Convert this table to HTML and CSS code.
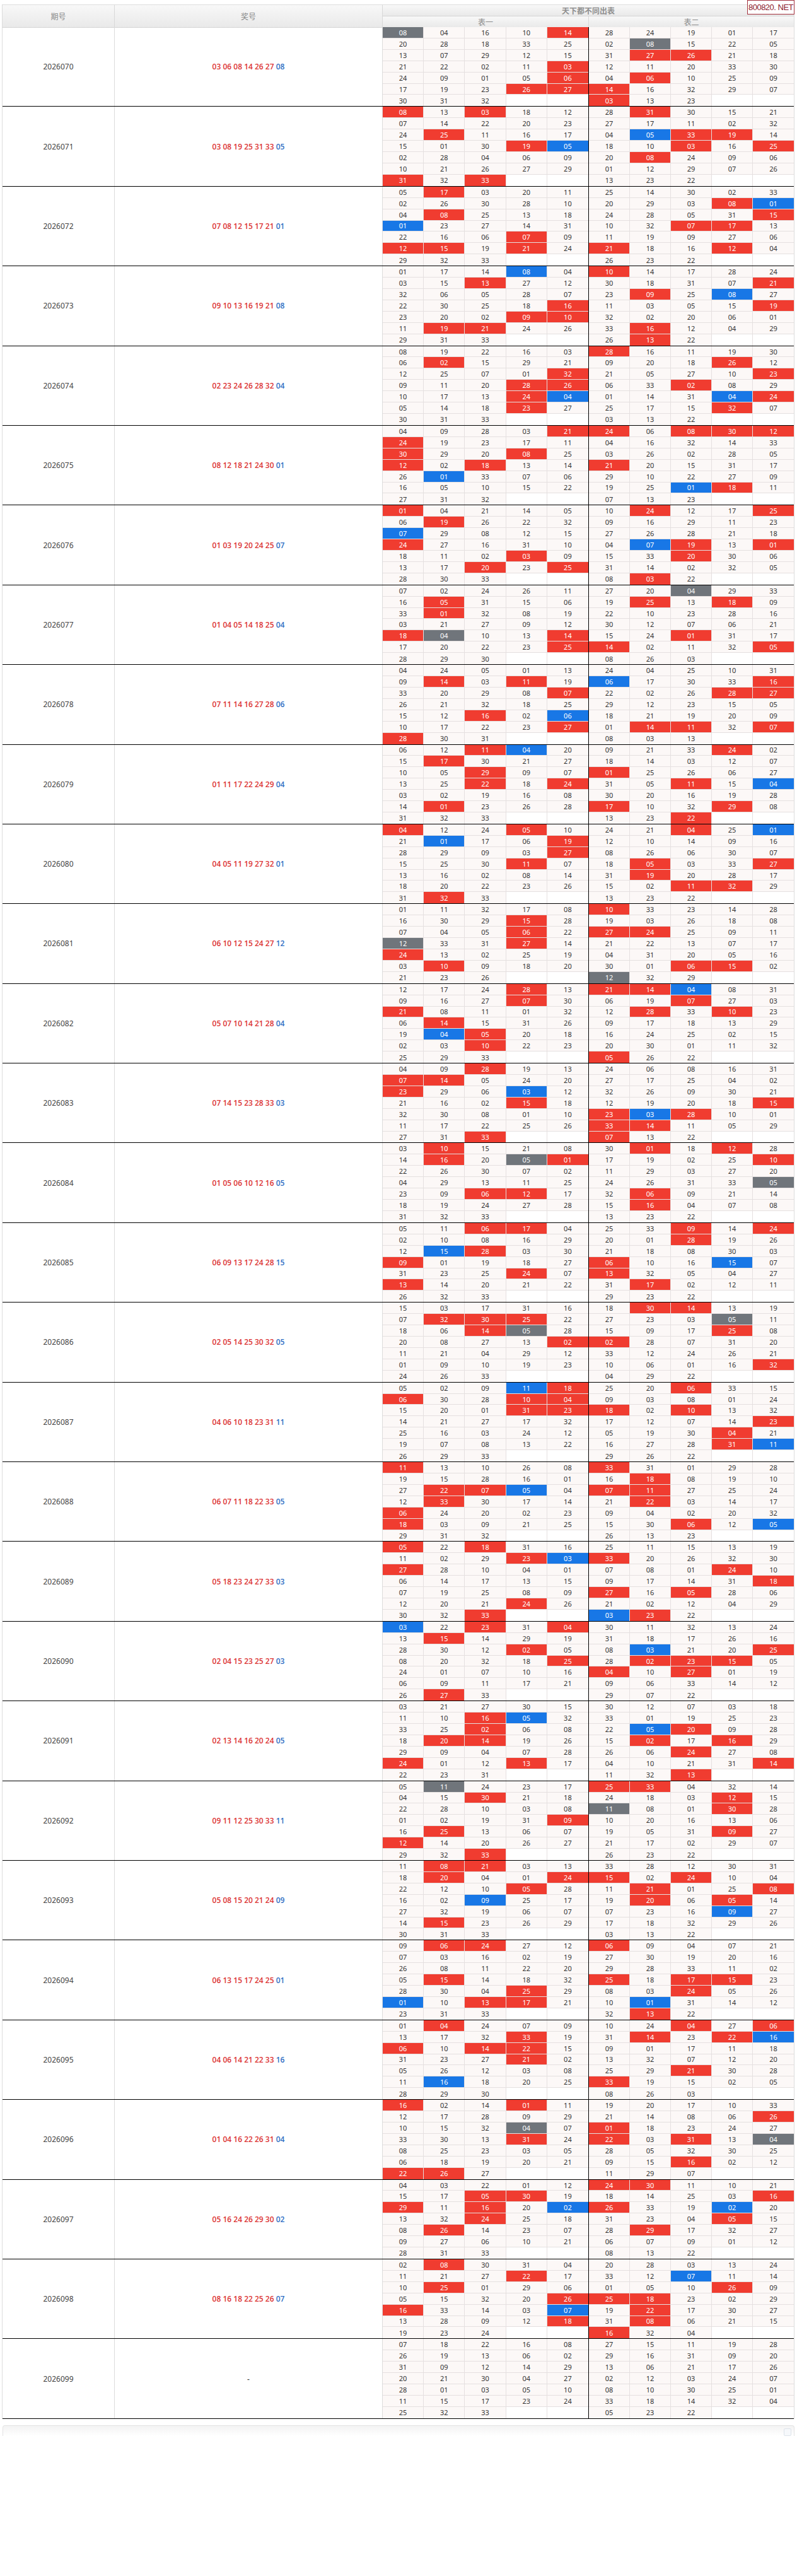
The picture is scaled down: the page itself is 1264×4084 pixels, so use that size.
FILE: index.html
```html
<!DOCTYPE html>
<html lang="zh-CN">
<head>
<meta charset="utf-8">
<title>天下都不同出表</title>
<link rel="stylesheet" href="styles.css">
</head>
<body>
<div class="page">
  <div class="brand">800820. NET</div>
  <div class="tbl">
    <div class="hd">
      <div class="h h-qh">期号</div>
      <div class="h h-jh">奖号</div>
      <div class="h h-ttl">天下都不同出表</div>
      <div class="h h-sub h-sub1">表一</div>
      <div class="h h-sub">表二</div>
    </div>
    <div id="rows"></div>
  </div>
  <div class="fold"><span class="fold-btn"></span></div>
</div>
<script src="script.js"></script>
</body>
</html>
```

FILE: styles.css
```css
html, body {
  margin: 0;
  padding: 0;
  background: #fff;
}
body {
  font-family: "Noto Sans", "Noto Sans CJK SC", sans-serif;
  color: #333;
}
.page {
  position: relative;
  width: 1264px;
  padding-top: 7px;
  box-sizing: border-box;
}
.brand {
  position: absolute;
  top: 0;
  right: 4px;
  width: 75px;
  height: 23px;
  box-sizing: border-box;
  border: 1px solid #a2303c;
  background: #fff;
  color: #8c1a2c;
  font-family: "Liberation Sans Narrow", "Liberation Sans", sans-serif;
  font-size: 13px;
  line-height: 21px;
  text-align: center;
  letter-spacing: -0.5px;
  white-space: nowrap;
  overflow: hidden;
  z-index: 2;
}
.tbl {
  margin-left: 3px;
  width: 1257px;
  border-left: 1px solid #dcdcdc;
  border-right: 1px solid #dcdcdc;
  box-sizing: border-box;
}
.hd {
  display: grid;
  grid-template-columns: 178px 425px 327px 325px;
  grid-template-rows: 18px 18px;
  border-top: 1px solid #dedede;
  box-sizing: border-box;
  height: 36px;
}
.h {
  display: flex;
  align-items: center;
  justify-content: center;
  background: linear-gradient(#f8f8f8, #e9e9e9);
  color: #8a8a8a;
  font-size: 12px;
  border-bottom: 1px solid #d4d4d4;
  border-right: 1px solid #d8d8d8;
}
.h-qh, .h-jh {
  grid-row: 1 / 3;
}
.h-ttl {
  grid-column: 3 / 5;
  border-right: 0;
  font-weight: 600;
  color: #8f8f8f;
}
.h-sub:last-child {
  border-right: 0;
}
.blk {
  display: grid;
  grid-template-columns: 178px 425px 327px 325px;
  height: 126.4px;
  border-bottom: 1px solid #000;
  box-sizing: border-box;
}
.qh, .jh {
  display: flex;
  align-items: center;
  justify-content: center;
  border-right: 1px solid #dcdcdc;
  font-size: 12px;
  color: #444;
}
.jh {
  font-family: "Open Sans", "Noto Sans", sans-serif;
  font-weight: 600;
}
.jh .win {
  white-space: pre;
}
.jh .rd {
  color: #dc3434;
}
.jh .bl {
  color: #2f6fc4;
}
.tb {
  display: grid;
  grid-template-columns: repeat(5, 1fr);
  grid-template-rows: repeat(7, 1fr);
}
.t1 {
  border-right: 1px solid #000;
}
.c {
  display: flex;
  align-items: center;
  justify-content: center;
  background: #fcf8f7;
  color: #333;
  font-size: 11px;
  border-right: 1px solid #e5e0e0;
  border-bottom: 1px solid #e5e0e0;
}
.c:nth-child(5n) {
  border-right: 0;
}
.c:nth-child(n+31) {
  border-bottom: 0;
}
.c.e {
  background: #fff;
}
.c.r {
  background: #f03c30;
  color: #fff;
}
.c.b {
  background: #1877e6;
  color: #fff;
}
.c.g {
  background: #70757b;
  color: #fff;
}
.fold {
  position: relative;
  margin: 10px 4px 0 4px;
  height: 16px;
  border: 1px solid #e3e3e3;
  border-bottom: 0;
  border-radius: 4px 4px 0 0;
  background: linear-gradient(#f3f3f3, #fff);
}
.fold-btn {
  position: absolute;
  right: 4px;
  top: 4px;
  width: 10px;
  height: 10px;
  border: 1px solid #dde3ea;
  border-radius: 2px;
  background: #f6f8fb;
}
```

FILE: script.js
```js
(function () {
  var data = [
    ["2026070", "08 04 16 10 14 20 28 18 33 25 13 07 29 12 15 21 22 02 11 03 24 09 01 05 06 17 19 23 26 27 30 31 32", "28 24 19 01 17 02 08 15 22 05 31 27 26 21 18 12 11 20 33 30 04 06 10 25 09 14 16 32 29 07 03 13 23", "03 06 08 14 26 27", "08"],
    ["2026071", "08 13 03 18 12 07 14 22 20 23 24 25 11 16 17 15 01 30 19 05 02 28 04 06 09 10 21 26 27 29 31 32 33", "28 31 30 15 21 27 17 11 02 32 04 05 33 19 14 18 10 03 16 25 20 08 24 09 06 01 12 29 07 26 13 23 22", "03 08 19 25 31 33", "05"],
    ["2026072", "05 17 03 20 11 02 26 30 28 10 04 08 25 13 18 01 23 27 14 31 22 16 06 07 09 12 15 19 21 24 29 32 33", "25 14 30 02 33 20 29 03 08 01 24 28 05 31 15 10 32 07 17 13 11 19 09 27 06 21 18 16 12 04 26 23 22", "07 08 12 15 17 21", "01"],
    ["2026073", "01 17 14 08 04 03 15 13 27 12 32 06 05 28 07 22 30 25 18 16 23 20 02 09 10 11 19 21 24 26 29 31 33", "10 14 17 28 24 30 18 31 07 21 23 09 25 08 27 11 03 05 15 19 32 02 20 06 01 33 16 12 04 29 26 13 22", "09 10 13 16 19 21", "08"],
    ["2026074", "08 19 22 16 03 06 02 15 29 21 12 25 07 01 32 09 11 20 28 26 10 17 13 24 04 05 14 18 23 27 30 31 33", "28 16 11 19 30 09 20 18 26 12 21 05 27 10 23 06 33 02 08 29 01 14 31 04 24 25 17 15 32 07 03 13 22", "02 23 24 26 28 32", "04"],
    ["2026075", "04 09 28 03 21 24 19 23 17 11 30 29 20 08 25 12 02 18 13 14 26 01 33 07 06 16 05 10 15 22 27 31 32", "24 06 08 30 12 04 16 32 14 33 03 26 02 28 05 21 20 15 31 17 29 10 22 27 09 19 25 01 18 11 07 13 23", "08 12 18 21 24 30", "01"],
    ["2026076", "01 04 21 14 05 06 19 26 22 32 07 29 08 12 15 24 27 16 31 10 18 11 02 03 09 13 17 20 23 25 28 30 33", "10 24 12 17 25 09 16 29 11 23 27 26 28 21 18 04 07 19 13 01 15 33 20 30 06 31 14 02 32 05 08 03 22", "01 03 19 20 24 25", "07"],
    ["2026077", "07 02 24 26 11 16 05 31 15 06 33 01 32 08 19 03 21 27 09 12 18 04 10 13 14 17 20 22 23 25 28 29 30", "27 20 04 29 33 19 25 13 18 09 22 10 23 28 16 30 12 07 06 21 15 24 01 31 17 14 02 11 32 05 08 26 03", "01 04 05 14 18 25", "04"],
    ["2026078", "04 24 05 01 13 09 14 03 11 19 33 20 29 08 07 26 21 32 18 25 15 12 16 02 06 10 17 22 23 27 28 30 31", "24 04 25 10 31 06 17 30 33 16 22 02 26 28 27 29 12 23 15 05 18 21 19 20 09 01 14 11 32 07 08 03 13", "07 11 14 16 27 28", "06"],
    ["2026079", "06 12 11 04 20 15 17 30 21 27 10 05 29 09 07 13 25 22 18 24 03 02 19 16 08 14 01 23 26 28 31 32 33", "09 21 33 24 02 18 14 03 12 07 01 25 26 06 27 31 05 11 15 04 30 20 16 19 28 17 10 32 29 08 13 23 22", "01 11 17 22 24 29", "04"],
    ["2026080", "04 12 24 05 10 21 01 17 06 19 28 29 09 03 27 15 25 30 11 07 13 16 02 08 14 18 20 22 23 26 31 32 33", "24 21 04 25 01 12 10 14 09 16 08 26 06 30 07 18 05 03 33 27 31 19 20 28 17 15 02 11 32 29 13 23 22", "04 05 11 19 27 32", "01"],
    ["2026081", "01 11 32 17 08 16 30 29 15 28 07 04 05 06 22 12 33 31 27 14 24 13 02 25 19 03 10 09 18 20 21 23 26", "10 33 23 14 28 19 03 26 18 08 27 24 25 09 11 21 22 13 07 17 04 31 20 05 16 30 01 06 15 02 12 32 29", "06 10 12 15 24 27", "12"],
    ["2026082", "12 17 24 28 13 09 16 27 07 30 21 08 11 01 32 06 14 15 31 26 19 04 05 20 18 02 03 10 22 23 25 29 33", "21 14 04 08 31 06 19 07 27 03 12 28 33 10 23 09 17 18 13 29 16 24 25 02 15 20 30 01 11 32 05 26 22", "05 07 10 14 21 28", "04"],
    ["2026083", "04 09 28 19 13 07 14 05 24 20 23 29 06 03 12 21 16 02 15 18 32 30 08 01 10 11 17 22 25 26 27 31 33", "24 06 08 16 31 27 17 25 04 02 32 26 09 30 21 12 19 20 18 15 23 03 28 10 01 33 14 11 05 29 07 13 22", "07 14 15 23 28 33", "03"],
    ["2026084", "03 10 15 21 08 14 16 20 05 01 22 26 30 07 02 04 29 13 11 25 23 09 06 12 17 18 19 24 27 28 31 32 33", "30 01 18 12 28 17 19 02 25 10 11 29 03 27 20 24 26 31 33 05 32 06 09 21 14 15 16 04 07 08 13 23 22", "01 05 06 10 12 16", "05"],
    ["2026085", "05 11 06 17 04 02 10 08 16 29 12 15 28 03 30 09 01 19 18 27 31 23 25 24 07 13 14 20 21 22 26 32 33", "25 33 09 14 24 20 01 28 19 26 21 18 08 30 03 06 10 16 15 07 13 32 05 04 27 31 17 02 12 11 29 23 22", "06 09 13 17 24 28", "15"],
    ["2026086", "15 03 17 31 16 07 32 30 25 22 18 06 14 05 28 20 08 27 13 02 11 21 04 29 12 01 09 10 19 23 24 26 33", "18 30 14 13 19 27 23 03 05 11 15 09 17 25 08 02 28 07 31 20 33 12 24 26 21 10 06 01 16 32 04 29 22", "02 05 14 25 30 32", "05"],
    ["2026087", "05 02 09 11 18 06 30 28 10 04 15 20 01 31 23 14 21 27 17 32 25 16 03 24 12 19 07 08 13 22 26 29 33", "25 20 06 33 15 09 03 08 01 24 18 02 10 13 32 17 12 07 14 23 05 19 30 04 21 16 27 28 31 11 29 26 22", "04 06 10 18 23 31", "11"],
    ["2026088", "11 13 10 26 08 19 15 28 16 01 27 22 07 05 04 12 33 30 17 14 06 24 20 02 23 18 03 09 21 25 29 31 32", "33 31 01 29 28 16 18 08 19 10 07 11 27 25 24 21 22 03 14 17 09 04 02 20 32 15 30 06 12 05 26 13 23", "06 07 11 18 22 33", "05"],
    ["2026089", "05 22 18 31 16 11 02 29 23 03 27 28 10 04 01 06 14 17 13 15 07 19 25 08 09 12 20 21 24 26 30 32 33", "25 11 15 13 19 33 20 26 32 30 07 08 01 24 10 09 17 14 31 18 27 16 05 28 06 21 02 12 04 29 03 23 22", "05 18 23 24 27 33", "03"],
    ["2026090", "03 22 23 31 04 13 15 14 29 19 28 30 12 02 05 08 20 32 18 25 24 01 07 10 16 06 09 11 17 21 26 27 33", "30 11 32 13 24 31 18 17 26 16 08 03 21 20 25 28 02 23 15 05 04 10 27 01 19 09 06 33 14 12 29 07 22", "02 04 15 23 25 27", "03"],
    ["2026091", "03 21 27 30 15 11 10 16 05 32 33 25 02 06 08 18 20 14 19 26 29 09 04 07 28 24 01 12 13 17 22 23 31", "30 12 07 03 18 33 01 19 25 23 22 05 20 09 28 15 02 17 16 29 26 06 24 27 08 04 10 21 31 14 11 32 13", "02 13 14 16 20 24", "05"],
    ["2026092", "05 11 24 23 17 04 15 30 21 18 22 28 10 03 08 01 02 19 31 09 16 25 13 06 07 12 14 20 26 27 29 32 33", "25 33 04 32 14 24 18 03 12 15 11 08 01 30 28 10 20 16 13 06 19 05 31 09 27 21 17 02 29 07 26 23 22", "09 11 12 25 30 33", "11"],
    ["2026093", "11 08 21 03 13 18 20 04 01 24 22 12 10 05 28 16 02 09 25 17 27 32 19 06 07 14 15 23 26 29 30 31 33", "33 28 12 30 31 15 02 24 10 04 11 21 01 25 08 19 20 06 05 14 07 23 16 09 27 17 18 32 29 26 03 13 22", "05 08 15 20 21 24", "09"],
    ["2026094", "09 06 24 27 12 07 03 16 02 19 26 08 11 22 20 05 15 14 18 32 28 30 04 25 29 01 10 13 17 21 23 31 33", "06 09 04 07 21 27 30 19 20 16 29 28 33 11 02 25 18 17 15 23 08 03 24 05 26 10 01 31 14 12 32 13 22", "06 13 15 17 24 25", "01"],
    ["2026095", "01 04 24 07 09 13 17 32 33 19 06 10 14 22 15 31 23 27 21 02 05 26 12 03 08 11 16 18 20 25 28 29 30", "10 24 04 27 06 31 14 23 22 16 09 01 17 11 18 13 32 07 12 20 25 29 21 30 28 33 19 15 02 05 08 26 03", "04 06 14 21 22 33", "16"],
    ["2026096", "16 02 14 01 11 12 17 28 09 29 10 15 32 04 07 33 30 13 31 24 08 25 23 03 05 06 18 19 20 21 22 26 27", "19 20 17 10 33 21 14 08 06 26 01 18 23 24 27 22 03 31 13 04 28 05 32 30 25 09 15 16 02 12 11 29 07", "01 04 16 22 26 31", "04"],
    ["2026097", "04 03 22 01 12 15 17 05 30 19 29 11 16 20 02 13 32 24 25 18 08 26 14 23 07 09 27 06 10 21 28 31 33", "24 30 11 10 21 18 14 25 03 16 26 33 19 02 20 31 23 04 05 15 28 29 17 32 27 06 07 09 01 12 08 13 22", "05 16 24 26 29 30", "02"],
    ["2026098", "02 08 30 31 04 11 21 27 22 17 10 25 01 29 06 05 15 32 20 26 16 33 14 03 07 13 28 09 12 18 19 23 24", "20 28 03 13 24 33 12 07 11 14 01 05 10 26 09 25 18 23 02 29 19 22 17 30 27 31 08 06 21 15 16 32 04", "08 16 18 22 25 26", "07"],
    ["2026099", "07 18 22 16 08 26 19 13 06 02 31 09 12 14 29 20 21 30 04 27 28 01 03 05 10 11 15 17 23 24 25 32 33", "27 15 11 19 28 29 16 31 09 20 13 06 21 17 26 02 12 03 24 07 08 10 30 25 01 33 18 14 32 04 05 23 22", "", ""]
  ];

  function table(nums, reds, blue, cls) {
    var out = ['<div class="tb ' + cls + '">'];
    for (var i = 0; i < 35; i++) {
      var n = nums[i];
      if (!n) {
        out.push('<div class="c e"></div>');
        continue;
      }
      var isRed = reds.indexOf(n) !== -1;
      var isBlue = n === blue;
      var k = isRed && isBlue ? ' g' : isRed ? ' r' : isBlue ? ' b' : '';
      out.push('<div class="c' + k + '">' + n + '</div>');
    }
    out.push('</div>');
    return out.join('');
  }

  var html = [];
  data.forEach(function (d) {
    var reds = d[3] ? d[3].split(' ') : [];
    var blue = d[4];
    var win = d[3]
      ? '<span class="rd">' + d[3] + '</span> <span class="bl">' + blue + '</span>'
      : '-';
    html.push(
      '<div class="blk">' +
        '<div class="qh">' + d[0] + '</div>' +
        '<div class="jh"><span class="win">' + win + '</span></div>' +
        table(d[1].split(' '), reds, blue, 't1') +
        table(d[2].split(' '), reds, blue, 't2') +
      '</div>'
    );
  });
  document.getElementById('rows').innerHTML = html.join('');
})();
```
